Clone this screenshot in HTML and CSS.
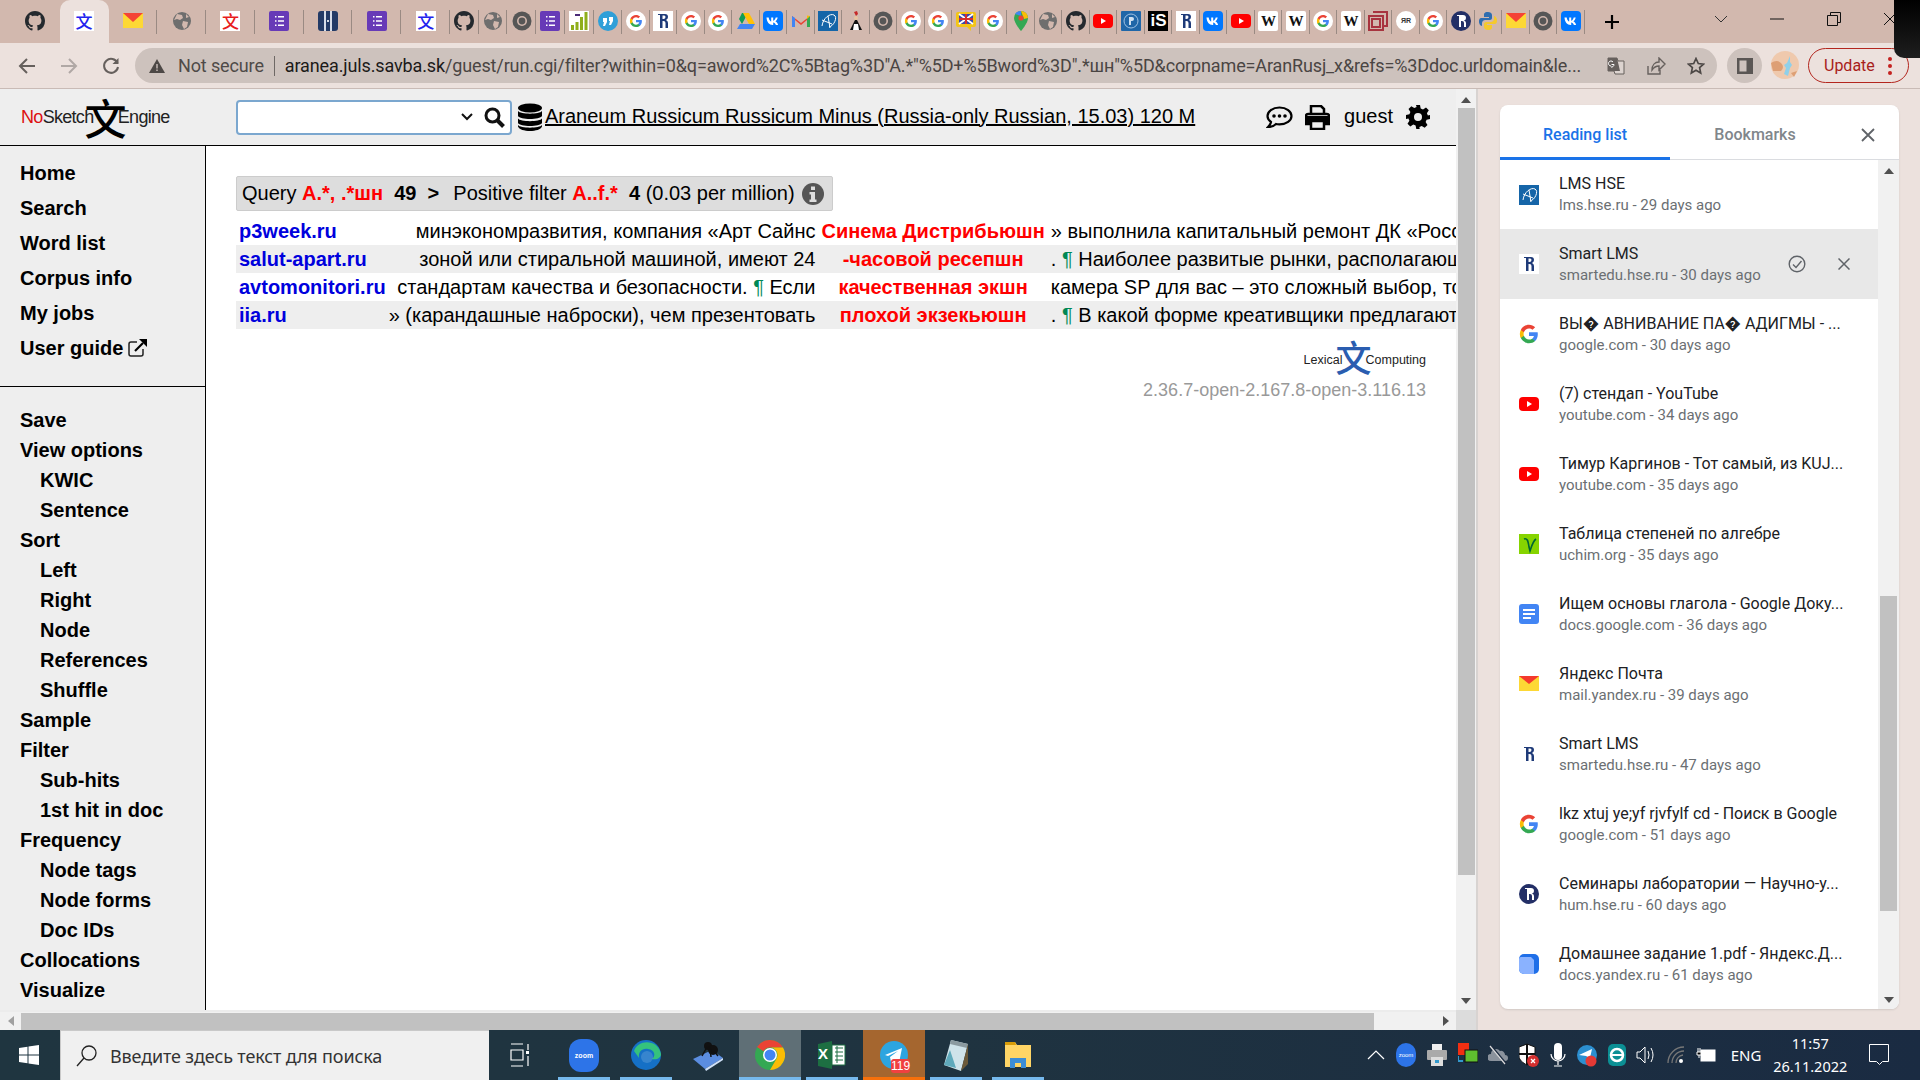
FILE: index.html
```html
<!DOCTYPE html>
<html lang="ru">
<head>
<meta charset="utf-8">
<title>NoSketch Engine</title>
<link rel="stylesheet" href="styles.css">
</head>
<body>
<svg class="defs" width="0" height="0">
  <symbol id="github" viewBox="0 0 16 16"><path fill="#24292e" d="M8 0C3.58 0 0 3.58 0 8c0 3.54 2.29 6.53 5.47 7.59.4.07.55-.17.55-.38 0-.19-.01-.82-.01-1.49-2.01.37-2.53-.49-2.69-.94-.09-.23-.48-.94-.82-1.13-.28-.15-.68-.52-.01-.53.63-.01 1.08.58 1.23.82.72 1.21 1.87.87 2.33.66.07-.52.28-.87.51-1.07-1.78-.2-3.64-.89-3.64-3.95 0-.87.31-1.59.82-2.15-.08-.2-.36-1.02.08-2.12 0 0 .67-.21 2.2.82.64-.18 1.32-.27 2-.27s1.36.09 2 .27c1.53-1.04 2.2-.82 2.2-.82.44 1.1.16 1.92.08 2.12.51.56.82 1.27.82 2.15 0 3.07-1.87 3.75-3.65 3.95.29.25.54.73.54 1.48 0 1.07-.01 1.93-.01 2.2 0 .21.15.46.55.38A8.013 8.013 0 0016 8c0-4.42-3.58-8-8-8z"/></symbol>
  <symbol id="mail" viewBox="0 0 20 20"><rect y="2" width="20" height="15" fill="#fdd835"/><path d="M0 2h20L10 11z" fill="#f44336"/></symbol>
  <symbol id="globe" viewBox="0 0 20 20"><circle cx="10" cy="10" r="9" fill="#6e6e6e"/><path d="M5 3l5 1 1 3-3 2-3-1-3 1zM11 10l5 1-1 5-3 2-2-4zM14 3l3 3-3 1z" fill="#d2b8ae"/></symbol>
  <symbol id="forms" viewBox="0 0 20 20"><rect width="20" height="20" rx="2" fill="#673ab7"/><path d="M6 5h1.5v1.5H6zM9 5h6v1.5H9zM6 9.2h1.5v1.5H6zM9 9.2h6v1.5H9zM6 13.4h1.5v1.5H6zM9 13.4h6v1.5H9z" fill="#fff"/></symbol>
  <symbol id="pill" viewBox="0 0 20 20"><rect width="20" height="20" rx="3" fill="#233a66"/><path d="M6 0h2v20H6zM12 0h2v20h-2z" fill="#d6dce8"/><rect x="9.2" y="9" width="1.6" height="2" fill="#fff"/></symbol>
  <symbol id="chrome" viewBox="0 0 20 20"><circle cx="10" cy="10" r="9.5" fill="#565656"/><circle cx="10" cy="10" r="5" fill="#d2b8ae"/><circle cx="10" cy="10" r="3.4" fill="#565656"/></symbol>
  <symbol id="bars" viewBox="0 0 20 20"><rect width="20" height="20" fill="#fff"/><path d="M2 14h3v5H2zM6.500 11h3v8h-3zM11 6h3v13h-3zM15.500 1h3v18h-3z" fill="#8fae1b"/><path d="M6 3h5v2H6z" fill="#4a2a78"/></symbol>
  <symbol id="quote" viewBox="0 0 20 20"><circle cx="10" cy="10" r="10" fill="#2f9fd8"/><path d="M5 7h4v4l-2 4H5l1-4H5zM11 6h4v4l-2 4h-2l1-4h-1z" fill="#fff"/></symbol>
  <symbol id="g" viewBox="0 0 24 24"><path fill="#4285F4" d="M22.56 12.25c0-.78-.07-1.53-.2-2.25H12v4.26h5.92c-.26 1.37-1.04 2.53-2.21 3.31v2.77h3.57c2.08-1.92 3.28-4.74 3.28-8.09z"/><path fill="#34A853" d="M12 23c2.97 0 5.46-.98 7.28-2.66l-3.57-2.77c-.98.66-2.23 1.06-3.71 1.06-2.86 0-5.29-1.93-6.16-4.53H2.18v2.84C3.99 20.53 7.7 23 12 23z"/><path fill="#FBBC05" d="M5.84 14.09c-.22-.66-.35-1.36-.35-2.09s.13-1.43.35-2.09V7.07H2.18C1.43 8.55 1 10.22 1 12s.43 3.45 1.18 4.93l3.66-2.84z"/><path fill="#EA4335" d="M12 5.38c1.62 0 3.06.56 4.21 1.64l3.15-3.15C17.45 2.09 14.97 1 12 1 7.7 1 3.99 3.47 2.18 7.07l3.66 2.84c.87-2.6 3.3-4.53 6.16-4.53z"/></symbol>
  <symbol id="gw" viewBox="0 0 24 24"><circle cx="12" cy="12" r="12" fill="#fff"/><use href="#g" x="4" y="4" width="16" height="16"/></symbol>
  <symbol id="hse" viewBox="0 0 20 20"><path d="M5 3h7q3 0 3 3 0 2-2 3 2 1 2 3v5h-2.500v-5q0-2-2-2h-1v7H7V4H5zM9.500 4.500V8h1q2 0 2-2t-2-1.500z" fill="#1e3a78" fill-rule="evenodd"/></symbol>
  <symbol id="hsew" viewBox="0 0 20 20"><rect width="20" height="20" fill="#fff"/><use href="#hse"/></symbol>
  <symbol id="hsec" viewBox="0 0 20 20"><circle cx="10" cy="10" r="10" fill="#232f66"/><path d="M6 4h6q3 0 3 3 0 2-2 2.500 2 .5 2 2.500v4h-2v-4q0-2-2-2h-1v6H8V5H6z" fill="#fff"/></symbol>
  <symbol id="hseb" viewBox="0 0 20 20"><rect width="20" height="20" rx="1" fill="#1f66a8"/><circle cx="10" cy="10" r="7" fill="none" stroke="#9fc2e4"/><path d="M8 6h3q2 0 2 2t-2 2h-1v4H8z" fill="#cfe0f0"/></symbol>
  <symbol id="drive" viewBox="0 0 20 20"><path d="M7 2h6l-6 11-3-5z" fill="#0f9d58" transform="translate(-1 0)"/><path d="M7 2h6l6 11h-6z" fill="#ffc107"/><path d="M1 18l3-5h15l-3 5z" fill="#4285f4"/></symbol>
  <symbol id="vk" viewBox="0 0 20 20"><rect width="20" height="20" rx="4" fill="#0077ff"/><path d="M3.500 6.500h2.200c.3 2.500 1.500 3.800 2.500 4V6.500h2v3.200c1-.1 2.100-1.300 2.500-3.200h2c-.3 1.900-1.500 3.200-2.300 3.800.9.500 2.200 1.600 2.700 3.700h-2.200c-.5-1.400-1.500-2.400-2.700-2.500V14h-.4C6.100 14 3.700 11 3.500 6.500z" fill="#fff"/></symbol>
  <symbol id="gmail" viewBox="0 0 20 20"><path d="M1 5l9 7 9-7v11h-3V9l-6 5-6-5v7H1z" fill="#ea4335"/><path d="M1 5v11h3V7z" fill="#4285f4"/><path d="M19 5v11h-3V7z" fill="#34a853"/><path d="M16 4.500l3 .5-3 3z" fill="#fbbc05"/></symbol>
  <symbol id="lms" viewBox="0 0 20 20"><rect width="20" height="20" fill="#1565a8"/><path d="M4 15C5 7 12 2 16 4s0 11-5 12M10 5l2 12M4 9l10 4" fill="none" stroke="#fff"/></symbol>
  <symbol id="figure" viewBox="0 0 20 20"><path d="M8 1l3-1 1 3-2 2z" fill="#c62828"/><circle cx="10" cy="7" r="2" fill="#e8c4a0"/><path d="M9 9h2l5 10H4z" fill="#111"/><path d="M8 13h4l1 6H7z" fill="#fff"/></symbol>
  <symbol id="gb" viewBox="0 0 20 20"><rect y="1" width="20" height="15" rx="2" fill="#f3c517"/><rect x="3" y="3" width="14" height="10" fill="#3949ab"/><path d="M3 3l14 10M17 3L3 13" stroke="#fff" stroke-width="2"/><path d="M10 3v10M3 8h14" stroke="#d32f2f" stroke-width="2"/><path d="M11 16h4v4z" fill="#f3c517"/></symbol>
  <symbol id="maps" viewBox="0 0 20 20"><path d="M10 0a7 7 0 0 0-7 7c0 5 7 13 7 13s7-8 7-13a7 7 0 0 0-7-7z" fill="#34a853"/><path d="M4 3a7 7 0 0 1 6-3v5z" fill="#4285f4"/><path d="M10 0a7 7 0 0 1 7 7l-4 1z" fill="#fbbc05"/><circle cx="10" cy="7" r="2.600" fill="#ea4335"/></symbol>
  <symbol id="yt" viewBox="0 0 20 20"><rect y="3" width="20" height="14" rx="4" fill="#f00"/><path d="M8 7l5 3-5 3z" fill="#fff"/></symbol>
  <symbol id="red" viewBox="0 0 20 20"><path d="M5 1h14v14h-4M1 5h14v14H1z" fill="none" stroke="#a8343f" stroke-width="2"/><rect x="4" y="8" width="8" height="8" fill="none" stroke="#a8343f" stroke-width="2"/></symbol>
  <symbol id="python" viewBox="0 0 20 20"><path d="M10 1C6 1 6 3 6 4v2h5v1H3C1 7 1 10 1 11s1 4 3 4V12c0-2 2-3 3-3h5c1 0 2-1 2-2V4c0-2-2-3-4-3z" fill="#2f6db0"/><path d="M10 19c4 0 4-2 4-3v-2H9v-1h8c2 0 2-3 2-4s-1-4-3-4v3c0 2-2 3-3 3H8c-1 0-2 1-2 2v3c0 2 2 3 4 3z" fill="#f5c92e"/></symbol>
  <symbol id="gdoc" viewBox="0 0 20 20"><rect width="20" height="20" rx="3" fill="#4285f4"/><path d="M4 5h12v2H4zM4 9h12v2H4zM4 13h8v2H4z" fill="#fff"/></symbol>
  <symbol id="uchim" viewBox="0 0 20 20"><rect width="20" height="20" fill="#86d400"/><path d="M5 5c3-1 4 1 5 8l1 4c2-6 3-10 6-12" fill="none" stroke="#063" stroke-width="1.600"/></symbol>
  <symbol id="ydocs" viewBox="0 0 20 20"><rect width="20" height="20" rx="5" fill="#1f6fe8"/><path d="M0 5q0-2 2-2h10l3 3v14H5a5 5 0 0 1-5-5z" fill="#8ab2ff"/></symbol>
  <symbol id="ymail" viewBox="0 0 20 20"><rect y="2" width="20" height="15" fill="#fdd835"/><path d="M0 2h20L10 10z" fill="#f4392d"/></symbol>
</svg>

<div class="tabstrip">
  <div class="tab"><svg class="ic"><use href="#github"/></svg></div>
  <div class="tab active"><span class="wen blue">文</span></div>
  <div class="tab sep"><svg class="ic"><use href="#mail"/></svg></div>
  <div class="tab sep"><svg class="ic"><use href="#globe"/></svg></div>
  <div class="tab sep"><span class="wen redw">文</span></div>
  <div class="tab sep"><svg class="ic"><use href="#forms"/></svg></div>
  <div class="tab sep"><svg class="ic"><use href="#pill"/></svg></div>
  <div class="tab sep"><svg class="ic"><use href="#forms"/></svg></div>
  <div class="tab sep"><span class="wen blue">文</span></div>
  <div class="tab mini wider"><svg class="ic"><use href="#github"/></svg></div>
  <div class="tab mini wider"><svg class="ic"><use href="#globe"/></svg></div>
  <div class="tab mini wider"><svg class="ic"><use href="#chrome"/></svg></div>
  <div class="tab mini wider"><svg class="ic"><use href="#forms"/></svg></div>
  <div class="tab mini wider"><svg class="ic"><use href="#bars"/></svg></div>
  <div class="tab mini wider"><svg class="ic"><use href="#quote"/></svg></div>
  <div class="tab mini"><svg class="ic"><use href="#gw"/></svg></div>
  <div class="tab mini"><svg class="ic"><use href="#hsew"/></svg></div>
  <div class="tab mini"><svg class="ic"><use href="#gw"/></svg></div>
  <div class="tab mini"><svg class="ic"><use href="#gw"/></svg></div>
  <div class="tab mini"><svg class="ic"><use href="#drive"/></svg></div>
  <div class="tab mini"><svg class="ic"><use href="#vk"/></svg></div>
  <div class="tab mini"><svg class="ic"><use href="#gmail"/></svg></div>
  <div class="tab mini"><svg class="ic"><use href="#lms"/></svg></div>
  <div class="tab mini"><svg class="ic"><use href="#figure"/></svg></div>
  <div class="tab mini"><svg class="ic"><use href="#chrome"/></svg></div>
  <div class="tab mini"><svg class="ic"><use href="#gw"/></svg></div>
  <div class="tab mini"><svg class="ic"><use href="#gw"/></svg></div>
  <div class="tab mini"><svg class="ic"><use href="#gb"/></svg></div>
  <div class="tab mini"><svg class="ic"><use href="#gw"/></svg></div>
  <div class="tab mini"><svg class="ic"><use href="#maps"/></svg></div>
  <div class="tab mini"><svg class="ic"><use href="#globe"/></svg></div>
  <div class="tab mini"><svg class="ic"><use href="#github"/></svg></div>
  <div class="tab mini"><svg class="ic"><use href="#yt"/></svg></div>
  <div class="tab mini"><svg class="ic"><use href="#hseb"/></svg></div>
  <div class="tab mini"><span class="fav is">iS</span></div>
  <div class="tab mini"><svg class="ic"><use href="#hsew"/></svg></div>
  <div class="tab mini"><svg class="ic"><use href="#vk"/></svg></div>
  <div class="tab mini"><svg class="ic"><use href="#yt"/></svg></div>
  <div class="tab mini"><span class="fav wiki">W</span></div>
  <div class="tab mini"><span class="fav wiki">W</span></div>
  <div class="tab mini"><svg class="ic"><use href="#gw"/></svg></div>
  <div class="tab mini"><span class="fav wiki">W</span></div>
  <div class="tab mini"><svg class="ic"><use href="#red"/></svg></div>
  <div class="tab mini"><span class="fav circ">ЯR</span></div>
  <div class="tab mini"><svg class="ic"><use href="#gw"/></svg></div>
  <div class="tab mini"><svg class="ic"><use href="#hsec"/></svg></div>
  <div class="tab mini"><svg class="ic"><use href="#python"/></svg></div>
  <div class="tab mini"><svg class="ic"><use href="#mail"/></svg></div>
  <div class="tab mini"><svg class="ic"><use href="#chrome"/></svg></div>
  <div class="tab mini"><svg class="ic"><use href="#vk"/></svg></div>
  <div class="newtab"><svg width="16" height="16" viewBox="0 0 16 16"><path d="M8 1v14M1 8h14" stroke="#000" stroke-width="2.200"/></svg></div>
  <div class="winctl">
    <svg width="14" height="8" viewBox="0 0 14 8"><path d="M1 1l6 6 6-6" fill="none" stroke="#333"/></svg>
    <svg width="14" height="2" viewBox="0 0 14 2"><path d="M0 1h14" stroke="#111"/></svg>
    <svg width="14" height="14" viewBox="0 0 14 14"><path d="M3.500 3V.5h10v10H11M.5 3.500h10v10H.5z" fill="none" stroke="#111"/></svg>
    <svg width="14" height="14" viewBox="0 0 14 14"><path d="M1 1l12 12M13 1L1 13" stroke="#111"/></svg>
  </div>
</div>
<div class="blackcorner"></div>

<div class="toolbar">
  <div class="navbtns">
    <svg width="18" height="18" viewBox="0 0 18 18"><path d="M17 9H2M9 2L2 9l7 7" fill="none" stroke="#66605d" stroke-width="2"/></svg>
    <svg width="18" height="18" viewBox="0 0 18 18"><path d="M1 9h15M9 2l7 7-7 7" fill="none" stroke="#b0a8a5" stroke-width="2"/></svg>
    <svg width="18" height="18" viewBox="0 0 18 18"><path d="M15.500 6A7 7 0 1 0 16 10" fill="none" stroke="#66605d" stroke-width="2"/><path d="M16.500 1v6h-6z" fill="#66605d"/></svg>
  </div>
  <div class="omnibox">
    <svg class="warn" width="16" height="14" viewBox="0 0 16 14"><path d="M8 0l8 14H0z" fill="#4d4846"/><path d="M7.300 5h1.400v4.500H7.300zM7.300 10.500h1.400V12H7.300z" fill="#cdc2bd"/></svg>
    <span class="notsec">Not secure</span>
    <span class="omsep"></span>
    <span class="url"><b>aranea.juls.savba.sk</b>/guest/run.cgi/filter?within=0&amp;q=aword%2C%5Btag%3D"A.*"%5D+%5Bword%3D".*шн"%5D&amp;corpname=AranRusj_x&amp;refs=%3Ddoc.urldomain&amp;le...</span>
    <span class="omicons">
      <svg width="18" height="18" viewBox="0 0 18 18"><path d="M1 1h9l1 3h6v13H8l-1-3H1z" fill="#dcd3cf" stroke="#66605d"/><path d="M1 1h9l3 13H1z" fill="#66605d"/><path d="M4 9a2.500 2.500 0 1 1 2-4M4.500 7.500H7A2.500 2.500 0 0 1 4 10" fill="none" stroke="#fff"/></svg>
      <svg width="20" height="18" viewBox="0 0 20 18"><path d="M2 9v8h12v-4M6 13C6 8 9 5 13 5V1l6 6-6 6V9c-3 0-5 1-7 4z" fill="none" stroke="#66605d" stroke-width="1.400"/></svg>
      <svg width="18" height="18" viewBox="0 0 18 18"><path d="M9 1.500l2.300 5 5.200.6-3.900 3.500 1.100 5.400L9 13.300 4.300 16l1.100-5.400L1.500 7.100l5.200-.6z" fill="none" stroke="#4d4846" stroke-width="1.700"/></svg>
    </span>
  </div>
  <div class="sidebtn"><svg width="18" height="18" viewBox="0 0 18 18"><path d="M1 1h16v16H1zM3.500 3.500v11h7v-11z" fill="#5a5654" fill-rule="evenodd"/></svg></div>
  <div class="avatar"><svg width="28" height="28" viewBox="0 0 28 28"><circle cx="14" cy="14" r="14" fill="#efc9ad"/><path d="M0 12q6-4 10 0t0 8H2zM20 22l6-2-3 6z" fill="#dd9f75"/><path d="M19 5l-3 7-3 2 2 3-2 6 4 2 2-8 2-3-2-3z" fill="#8fd0ea"/></svg></div>
  <div class="update"><span>Update</span><span class="dots"><i></i><i></i><i></i></span></div>
</div>

<div class="main">
  <div class="view">
    <div class="viewtop">
      <div class="page">
        <header class="hdr">
          <div class="logo"><span class="no">No</span>Sketch<span class="wenlogo">文</span>Engine</div>
          <div class="searchbox">
            <svg width="12" height="8" viewBox="0 0 12 8"><path d="M1 1l5 5 5-5" fill="none" stroke="#111" stroke-width="2"/></svg>
            <svg width="21" height="21" viewBox="0 0 21 21"><circle cx="8.500" cy="8.500" r="6.500" fill="none" stroke="#111" stroke-width="3"/><path d="M13 13l6.500 6.500" stroke="#111" stroke-width="4"/></svg>
          </div>
          <svg class="db" width="24" height="28" viewBox="0 0 24 28"><ellipse cx="12" cy="5" rx="12" ry="4.500" fill="#000"/><path d="M0 8c2 3.500 22 3.500 24 0v5c-2 4-22 4-24 0zM0 15.500c2 3.500 22 3.500 24 0V20c-2 4-22 4-24 0zM0 22c2 3.500 22 3.500 24 0v1.500c-2 6-22 6-24 0z" fill="#000"/></svg>
          <a class="corpus">Araneum Russicum Russicum Minus (Russia-only Russian, 15.03) 120 M</a>
          <span class="hright">
            <svg width="27" height="23" viewBox="0 0 27 23"><path d="M13.500 1.500C6.500 1.500 1.500 5.500 1.500 10c0 2.500 1.500 4.500 3.500 6-.3 2-1.500 3.500-3 5 3 0 6-1 8-3 1 .3 2.500.3 3.500.3 7 0 12-3.800 12-8.300s-5-8.500-12-8.500z" fill="none" stroke="#000" stroke-width="2.200"/><circle cx="8" cy="10" r="1.800"/><circle cx="13.500" cy="10" r="1.800"/><circle cx="19" cy="10" r="1.800"/></svg>
            <svg width="25" height="25" viewBox="0 0 25 25"><path d="M6 10V1h10l3 3v6M6 19H1v-8q0-2 2-2h19q2 0 2 2v8h-5" fill="none" stroke="#000" stroke-width="2.500"/><path d="M1 11h23v8h-5v-3H6v3H1z" fill="#000"/><rect x="6" y="16" width="13" height="8" fill="none" stroke="#000" stroke-width="2.500"/></svg>
            <span class="guest">guest</span>
            <svg width="24" height="24" viewBox="0 0 24 24"><path d="M10 0h4l.7 3.400 2.300 1 3-1.900 2.800 2.800-1.900 3 1 2.300L24 10v4l-3.400.7-1 2.300 1.900 3-2.800 2.800-3-1.900-2.300 1L13.700 24h-3.400l-.7-3.400-2.300-1-3 1.900-2.800-2.800 1.900-3-1-2.300L0 14v-4l3.400-.7 1-2.300-1.900-3L5.300 1.200l3 1.900 2.300-1zM12 8a4 4 0 1 0 0 8 4 4 0 0 0 0-8z" fill-rule="evenodd"/></svg>
          </span>
        </header>
        <div class="body">
          <nav class="side">
            <ul class="nav1">
              <li>Home</li><li>Search</li><li>Word list</li><li>Corpus info</li><li>My jobs</li>
              <li>User guide <svg width="20" height="19" viewBox="0 0 20 19"><path d="M9 3H3q-2 0-2 2v10q0 2 2 2h10q2 0 2-2v-5" fill="none" stroke="#222" stroke-width="1.500"/><path d="M7 12L15 4" stroke="#000" stroke-width="2.200"/><path d="M11 0h8v8z" fill="#000"/></svg></li>
            </ul>
            <ul class="nav2">
              <li>Save</li><li>View options</li><li class="sub">KWIC</li><li class="sub">Sentence</li>
              <li>Sort</li><li class="sub">Left</li><li class="sub">Right</li><li class="sub">Node</li><li class="sub">References</li><li class="sub">Shuffle</li>
              <li>Sample</li><li>Filter</li><li class="sub">Sub-hits</li><li class="sub">1st hit in doc</li>
              <li>Frequency</li><li class="sub">Node tags</li><li class="sub">Node forms</li><li class="sub">Doc IDs</li>
              <li>Collocations</li><li>Visualize</li>
            </ul>
          </nav>
          <main class="content">
            <div class="querybar"><span>Query <b class="r">A.*, .*шн</b>&nbsp; <b>49</b>&nbsp; <b class="gt">&gt;</b>&nbsp; Positive filter <b class="r">A..f.*</b>&nbsp; <b>4</b> (0.03 per million)</span>
              <svg width="22" height="22" viewBox="0 0 22 22"><circle cx="11" cy="11" r="11" fill="#555"/><path d="M9 3.500h4v3.500H9zM7.500 9H13v7.500h1.500V19h-7v-2.500H9v-5H7.500z" fill="#ddd"/></svg>
            </div>
            <div class="results">
              <table>
                <tr><td class="dom">p3week.ru</td><td class="left">минэкономразвития, компания «Арт Сайнс</td><td class="kwic">Синема Дистрибьюшн</td><td class="right">» выполнила капитальный ремонт ДК «Россия»</td></tr>
                <tr><td class="dom">salut-apart.ru</td><td class="left">зоной или стиральной машиной, имеют 24</td><td class="kwic">-часовой ресепшн</td><td class="right">. <i class="pil">¶</i> Наиболее развитые рынки, располагающие</td></tr>
                <tr><td class="dom">avtomonitori.ru</td><td class="left">стандартам качества и безопасности. <i class="pil">¶</i> Если</td><td class="kwic">качественная экшн</td><td class="right">камера SP для вас – это сложный выбор, точнее</td></tr>
                <tr><td class="dom">iia.ru</td><td class="left">» (карандашные наброски), чем презентовать</td><td class="kwic">плохой экзекьюшн</td><td class="right">. <i class="pil">¶</i> В какой форме креативщики предлагают</td></tr>
              </table>
            </div>
            <div class="foot">
              <div class="lc">Lexical<span class="wenlc">文</span>Computing</div>
              <div class="ver">2.36.7-open-2.167.8-open-3.116.13</div>
            </div>
          </main>
        </div>
      </div>
      <div class="vbar"><span class="up"></span><span class="thumb"></span><span class="dn"></span></div>
    </div>
    <div class="hbar"><span class="lt"></span><span class="hthumb"></span><span class="rt"></span><span class="corner"></span></div>
  </div>

  <aside class="panel">
    <div class="card">
      <div class="ptabs"><span class="ptab on">Reading list</span><span class="ptab">Bookmarks</span>
        <svg class="pclose" width="14" height="14" viewBox="0 0 14 14"><path d="M1 1l12 12M13 1L1 13" stroke="#5f6368" stroke-width="1.800"/></svg></div>
      <div class="plist">
        <div class="items">
          <div class="it"><svg class="ic"><use href="#lms"/></svg><div class="tx"><div class="t">LMS HSE</div><div class="s">lms.hse.ru - 29 days ago</div></div></div>
          <div class="it hov"><svg class="ic"><use href="#hsew"/></svg><div class="tx"><div class="t">Smart LMS</div><div class="s">smartedu.hse.ru - 30 days ago</div></div>
            <span class="acts"><svg width="18" height="18" viewBox="0 0 18 18"><circle cx="9" cy="9" r="7.800" fill="none" stroke="#5f6368" stroke-width="1.400"/><path d="M5 9.500l3 3 5.500-6.500" fill="none" stroke="#5f6368" stroke-width="1.400"/></svg><svg width="12" height="12" viewBox="0 0 12 12"><path d="M.5.5l11 11M11.500.5l-11 11" stroke="#5f6368" stroke-width="1.500"/></svg></span></div>
          <div class="it"><svg class="ic"><use href="#g"/></svg><div class="tx"><div class="t">ВЫ� АВНИВАНИЕ ПА� АДИГМЫ - ...</div><div class="s">google.com - 30 days ago</div></div></div>
          <div class="it"><svg class="ic"><use href="#yt"/></svg><div class="tx"><div class="t">(7) стендап - YouTube</div><div class="s">youtube.com - 34 days ago</div></div></div>
          <div class="it"><svg class="ic"><use href="#yt"/></svg><div class="tx"><div class="t">Тимур Каргинов - Тот самый, из KUJ...</div><div class="s">youtube.com - 35 days ago</div></div></div>
          <div class="it"><svg class="ic"><use href="#uchim"/></svg><div class="tx"><div class="t">Таблица степеней по алгебре</div><div class="s">uchim.org - 35 days ago</div></div></div>
          <div class="it"><svg class="ic"><use href="#gdoc"/></svg><div class="tx"><div class="t">Ищем основы глагола - Google Доку...</div><div class="s">docs.google.com - 36 days ago</div></div></div>
          <div class="it"><svg class="ic"><use href="#ymail"/></svg><div class="tx"><div class="t">Яндекс Почта</div><div class="s">mail.yandex.ru - 39 days ago</div></div></div>
          <div class="it"><svg class="ic"><use href="#hse"/></svg><div class="tx"><div class="t">Smart LMS</div><div class="s">smartedu.hse.ru - 47 days ago</div></div></div>
          <div class="it"><svg class="ic"><use href="#g"/></svg><div class="tx"><div class="t">lkz xtuj ye;yf rjvfylf cd - Поиск в Google</div><div class="s">google.com - 51 days ago</div></div></div>
          <div class="it"><svg class="ic"><use href="#hsec"/></svg><div class="tx"><div class="t">Семинары лаборатории — Научно-у...</div><div class="s">hum.hse.ru - 60 days ago</div></div></div>
          <div class="it"><svg class="ic"><use href="#ydocs"/></svg><div class="tx"><div class="t">Домашнее задание 1.pdf - Яндекс.Д...</div><div class="s">docs.yandex.ru - 61 days ago</div></div></div>
        </div>
        <div class="pbar"><span class="up"></span><span class="pthumb"></span><span class="dn"></span></div>
      </div>
    </div>
  </aside>
</div>

<footer class="taskbar">
  <div class="start"><svg width="20" height="20" viewBox="0 0 20 20"><path d="M0 3l8.500-1.200v7.700H0zM9.500 1.600L20 0v9.500H9.500zM0 10.500h8.500v7.700L0 17zM9.500 10.500H20V20L9.500 18.400z" fill="#fff"/></svg></div>
  <div class="tsearch"><svg width="22" height="24" viewBox="0 0 22 24"><circle cx="13" cy="9" r="7" fill="none" stroke="#222" stroke-width="1.300"/><path d="M8 14l-7 8" stroke="#222" stroke-width="1.300"/></svg><span>Введите здесь текст для поиска</span></div>
  <div class="tview"><svg width="20" height="24" viewBox="0 0 20 24"><path d="M1 1h12M1 23h12M1 7h12v10H1zM18 1v6M18 13v10" fill="none" stroke="#fff" stroke-width="1.200"/><rect x="16" y="8" width="3" height="3" fill="#fff"/></svg></div>
  <div class="apps">
    <div class="app on"><svg width="30" height="36" viewBox="0 0 30 36"><rect y="2" width="30" height="33" rx="12" fill="#2d74e8"/><text x="15" y="21" class="zoomtx">zoom</text></svg></div>
    <div class="app on"><svg width="32" height="36" viewBox="0 0 32 36"><circle cx="16" cy="18" r="15" fill="#1570c6"/><path d="M4 14C8 2 28 2 31 17c0 4-4 6-9 5 4-3 3-9-4-10C12 11 8 15 9 21z" fill="#35c27d"/><circle cx="17" cy="20" r="6" fill="#fff" opacity=".15"/></svg></div>
    <div class="app"><svg width="32" height="32" viewBox="0 0 32 32"><path d="M1 20L20 11l11 8-18 11z" fill="#5b8de0"/><path d="M13 30l18-11v2L14 32z" fill="#cfe0f8"/><circle cx="16" cy="7" r="4" fill="#111"/><circle cx="21" cy="11" r="5" fill="#111"/><path d="M15 8l-5 9M18 8l1 10M22 12l4 5" stroke="#111" stroke-width="1.500"/></svg></div>
    <div class="app on act"><svg width="30" height="30" viewBox="0 0 30 30"><circle cx="15" cy="15" r="15" fill="#34a853"/><path d="M15 0a15 15 0 0 1 13 7.500H15a7.500 7.500 0 0 0-6.500 3.800L2 7A15 15 0 0 1 15 0z" fill="#ea4335"/><path d="M28 7.500A15 15 0 0 1 15 30l6.500-11.300A7.500 7.500 0 0 0 15 7.500z" fill="#fbbc05"/><circle cx="15" cy="15" r="7" fill="#fff"/><circle cx="15" cy="15" r="5.500" fill="#4285f4"/></svg></div>
    <div class="app on"><svg width="28" height="28" viewBox="0 0 28 28"><path d="M0 3l14-3v28L0 25z" fill="#1d6f42"/><path d="M14 4h13v20H14z" fill="#fff" stroke="#1d6f42"/><path d="M17 7h8M17 11h8M17 15h8M17 19h8M19 5v17" stroke="#1d6f42"/></svg><span class="xl">X</span></div>
    <div class="app on tg"><svg width="28" height="28" viewBox="0 0 28 28"><circle cx="14" cy="14" r="14" fill="#2ca5e0"/><path d="M5 14l17-7-3 15-5-4-3 3-1-5 8-6-10 5z" fill="#fff"/></svg><span class="badge">119</span></div>
    <div class="app on"><svg width="26" height="32" viewBox="0 0 26 32"><path d="M8 1l17 4-7 27L1 26z" fill="#cfe3ea"/><path d="M8 1l17 4-1 4L7 5z" fill="#8b9aa0"/><path d="M18 32l7-27v20z" fill="#6b5a3a"/><path d="M1 26l6-15 6 18z" fill="#5fa9bb"/></svg></div>
    <div class="app on"><svg width="28" height="28" viewBox="0 0 28 28"><path d="M1 1h10l2 3h14v22H1z" fill="#ffd566"/><path d="M1 1h10l1 3H1z" fill="#d89c08"/><path d="M6 27V17h16v10h-5v-5h-6v5z" fill="#3c8dd6"/></svg></div>
  </div>
  <div class="tray">
    <svg width="18" height="10" viewBox="0 0 18 10"><path d="M1 9l8-8 8 8" fill="none" stroke="#fff" stroke-width="1.200"/></svg>
    <svg width="20" height="24" viewBox="0 0 20 24"><rect width="20" height="24" rx="10" fill="#2d74e8"/><text x="10" y="14" class="zoomtx2">zoom</text></svg>
    <svg width="20" height="24" viewBox="0 0 20 24"><path d="M5 1h10v6H5z" fill="#eee"/><rect y="7" width="20" height="10" rx="1" fill="#aaa"/><path d="M4 14h12v9H4z" fill="#ddd"/><path d="M8 17h4v3H8z" fill="#39c"/></svg>
    <svg width="20" height="24" viewBox="0 0 20 24"><rect width="11" height="12" fill="#f32f12"/><rect x="7" y="7" width="13" height="12" fill="#5fbf2f" stroke="#111"/><path d="M0 13v5h5" fill="none" stroke="#39c" stroke-width="2"/></svg>
    <svg width="20" height="20" viewBox="0 0 20 20"><path d="M3 16a3.500 3.500 0 0 1 0-7 5 5 0 0 1 9-3 4 4 0 0 1 5 4 3 3 0 0 1 0 6z" fill="#8a929c"/><path d="M3 1l15 18" stroke="#1c2b40" stroke-width="2.500"/><path d="M2 1l15 18" stroke="#ddd" stroke-width="1.200"/></svg>
    <span class="traysh"><svg width="20" height="24" viewBox="0 0 20 24"><path d="M8 1l8 3v9c0 4-4 7-8 9-4-2-8-5-8-9V4z" fill="#fff" stroke="#111"/><path d="M8 1v21M0 11h16" stroke="#111" stroke-width="2"/><circle cx="14" cy="18" r="6" fill="#d32f2f"/><path d="M12 16l4 4M16 16l-4 4" stroke="#fff" stroke-width="1.300"/></svg></span>
    <svg width="16" height="24" viewBox="0 0 16 24"><rect x="4" width="8" height="17" rx="4" fill="#fff"/><path d="M1 11a7 7 0 0 0 14 0M8 18v4M4 23h8" fill="none" stroke="#fff" stroke-width="1.200"/></svg>
    <svg width="20" height="24" viewBox="0 0 20 24"><circle cx="10" cy="12" r="10" fill="#2c8fd0"/><path d="M2 12l13-6-2 9-4-2z" fill="#fff"/><circle cx="14" cy="18" r="5.500" fill="#e53935"/></svg>
    <svg width="18" height="22" viewBox="0 0 18 22"><rect width="18" height="22" rx="5" fill="#0c8f94"/><circle cx="9" cy="11" r="6" fill="none" stroke="#fff" stroke-width="2.500"/><path d="M4 11h10" stroke="#fff" stroke-width="2"/></svg>
    <svg width="20" height="20" viewBox="0 0 20 20"><path d="M1 7h3l5-5v16l-5-5H1z" fill="none" stroke="#fff"/><path d="M12 6q2 4 0 8M15 3q4 7 0 14" fill="none" stroke="#fff"/></svg>
    <svg width="18" height="18" viewBox="0 0 18 18"><path d="M1 17A16 16 0 0 1 17 1M5 17A12 12 0 0 1 17 5M9 17a8 8 0 0 1 7-8" fill="none" stroke="#777" stroke-width="1.300"/><circle cx="14" cy="15" r="2" fill="#fff"/></svg>
    <svg width="20" height="14" viewBox="0 0 20 14"><rect x="5" y="2" width="14" height="11" fill="#fff" stroke="#fff"/><path d="M2 0v4M4 0v4M1 4h4v3H1zM3 7v3" stroke="#fff"/></svg>
    <span class="eng">ENG</span>
    <span class="clock"><span>11:57</span><span>26.11.2022</span></span>
    <svg class="notif" width="20" height="22" viewBox="0 0 20 22"><path d="M.5.5h19v17h-6l-3 3-3-3h-7z" fill="none" stroke="#fff"/></svg>
  </div>
</footer>
</body>
</html>
```

FILE: styles.css
```css
* { box-sizing: border-box; }
html, body { margin: 0; padding: 0; }
body { width: 1920px; height: 1080px; overflow: hidden; display: flex; flex-direction: column; font-family: "Liberation Sans", Arial, sans-serif; color: #000; position: relative; background: #ece1dd; }
.defs { position: absolute; }
ul { list-style: none; margin: 0; padding: 0; }

.tabstrip { height: 43px; background: #d2b8ae; display: flex; align-items: stretch; padding-left: 10.5px; flex: none; }
.tab { width: 49px; display: flex; align-items: center; justify-content: center; position: relative; flex: none; padding-bottom: 1px; }
.tab.active { background: #ece1dd; border-radius: 10px 10px 0 0; }
.tab.sep { width: 48.800px; }
.tab.sep::after, .tab.mini::after { content: ""; position: absolute; right: 0; top: 10px; bottom: 9px; width: 1px; background: #9a8a83; }
.tab.mini { width: 27.500px; }
.tab.mini.wider { width: 28.700px; }
.ic { width: 20px; height: 20px; flex: none; display: block; }
.wen { width: 20px; height: 20px; background: #fff; font: 500 17px/20px "Noto Sans CJK SC", sans-serif; text-align: center; }
.blue { color: #2222ee; }
.redw { color: #e81c1c; }
.fav { width: 20px; height: 20px; display: block; text-align: center; }
.is { background: #000; color: #fff; font: 700 17px/20px "Liberation Sans", sans-serif; }
.wiki { background: #fff; color: #111; font: 700 15px/20px "Liberation Serif", serif; border-radius: 2px; }
.circ { background: #fff; color: #333; border-radius: 50%; font: 700 7px/20px "Liberation Sans", sans-serif; }
.newtab { width: 54px; display: flex; align-items: center; justify-content: center; flex: none; }
.winctl { flex: 1; display: flex; align-items: center; gap: 42.500px; padding: 0 0 5px 75px; }
.blackcorner { position: absolute; right: 0; top: 0; width: 26px; height: 58px; background: linear-gradient(#000, #1e1e1e); border-radius: 0 0 0 10px; }

.toolbar { height: 46px; flex: none; display: flex; align-items: flex-start; padding-top: 5px; border-bottom: 1px solid #c9bbb6; background: #ece1dd; }
.navbtns { width: 135px; height: 35px; display: flex; align-items: center; padding-left: 18px; gap: 24px; }
.omnibox { width: 1582px; height: 35px; background: #cdc2bd; border-radius: 18px; display: flex; align-items: center; padding-left: 14px; font: 400 18px/35px "Roboto", sans-serif; letter-spacing: -.13px; color: #4a4543; overflow: hidden; flex: none; }
.warn { flex: none; }
.notsec { margin-left: 13px; color: #4f4a48; flex: none; }
.omsep { width: 1px; height: 20px; background: #6e6865; margin: 0 10px 0 10px; flex: none; }
.url { white-space: nowrap; flex: none; width: 1296px; overflow: hidden; }
.url b { font-weight: 400; color: #1c1a19; }
.omicons { display: flex; align-items: center; gap: 21px; margin-left: 26px; flex: none; }
.sidebtn { width: 35px; height: 35px; border-radius: 50%; background: #cdc2bd; margin-left: 10px; display: flex; align-items: center; justify-content: center; flex: none; }
.avatar { width: 28px; height: 28px; margin: 3px 0 0 9px; flex: none; }
.avatar svg { display: block; }
.update { width: 101px; height: 35px; margin-left: 9px; border: 1px solid #b3261e; border-radius: 18px; color: #a8201a; font: 400 16px/33px "Roboto", sans-serif; display: flex; align-items: center; padding-left: 15px; gap: 13px; flex: none; }
.dots { display: flex; flex-direction: column; gap: 3px; }
.dots i { width: 4px; height: 4px; border-radius: 50%; background: #c5221f; display: block; }

.main { height: 941px; flex: none; display: flex; }
.view { width: 1478px; display: flex; flex-direction: column; border-right: 2px solid #d8d3d1; background: #fff; flex: none; }
.viewtop { height: 921px; display: flex; }
.page { width: 1456px; display: flex; flex-direction: column; flex: none; }
.hdr { height: 57px; flex: none; background: #eee; border-bottom: 1px solid #000; display: flex; align-items: center; padding-left: 21px; }
.logo { width: 215px; flex: none; display: flex; align-items: center; font: 400 18px/1 "Liberation Sans Narrow", "Liberation Sans", sans-serif; color: #222; letter-spacing: -.7px; }
.no { color: #d11; }
.wenlogo { font: 500 42px/42px "Noto Sans CJK SC", sans-serif; color: #000; margin: 0 -8px 0 -9px; }
.searchbox { width: 276px; height: 35px; flex: none; background: #fff; border: 2px solid #7ba7cf; border-radius: 4px; display: flex; align-items: center; justify-content: flex-end; padding-right: 5px; gap: 11px; }
.db { margin-left: 6px; flex: none; }
.corpus { margin: 0 0 2px 3px; font-size: 20px; text-decoration: underline; white-space: nowrap; flex: none; }
.hright { margin-left: auto; display: flex; align-items: center; padding-right: 26px; gap: 0; }
.hright svg:nth-child(2) { margin-left: 12px; }
.guest { font-size: 20px; margin: 0 13px 2px 14px; }

.body { flex: 1; display: flex; min-height: 0; }
.side { width: 206px; flex: none; background: #eee; border-right: 1px solid #000; font-weight: 700; font-size: 20px; }
.nav1 { padding: 10px 0 20px 20px; border-bottom: 1px solid #000; }
.nav1 li { height: 35px; line-height: 35px; display: flex; align-items: center; gap: 5px; }
.nav2 { padding: 18px 0 0 20px; }
.nav2 li { height: 30px; line-height: 30px; }
.nav2 li.sub { padding-left: 20px; }

.content { flex: 1; min-width: 0; padding: 30px 0 0 30px; display: flex; flex-direction: column; align-items: flex-start; overflow: hidden; font-size: 20px; }
.querybar { height: 35px; background: #ddd; border: 1px solid #ccc; border-radius: 2px; display: flex; align-items: center; padding: 0 8px 0 5px; white-space: nowrap; flex: none; }
.querybar svg { margin-left: 7px; }
.gt { margin-right: 3px; }
.r { color: #f00; }
.results { width: 1220px; overflow: hidden; margin-top: 6px; flex: none; }
table { border-collapse: collapse; white-space: nowrap; }
tr { height: 28px; }
tr:nth-child(even) { background: #eee; }
td { padding: 0 3px; }
.dom { color: #00d; font-weight: 700; padding-right: 0; }
.left { text-align: right; }
.kwic { color: #f00; font-weight: 700; text-align: center; }
.pil { font-style: normal; color: #085; }
.foot { width: 1190px; display: flex; flex-direction: column; align-items: flex-end; margin-top: 12px; }
.lc { display: flex; align-items: center; font: 400 12.500px/36px "Liberation Sans", sans-serif; color: #222; height: 38px; }
.wenlc { font: 500 36px/38px "Noto Sans CJK SC", sans-serif; color: #2a5db0; margin: 0 -6px 0 -7px; transform: translateY(-4px); }
.ver { color: #999; font-size: 18px; margin-top: 1px; }

.vbar { width: 20px; flex: none; background: #f1f1f1; position: relative; display: flex; flex-direction: column; align-items: center; }
.vbar .thumb { width: 17px; height: 767px; background: #c1c1c1; margin-top: 19px; }
.up, .dn, .lt, .rt { width: 0; height: 0; border: 5px solid transparent; display: block; }
.up { border-bottom: 6px solid #505050; border-top: 0; position: absolute; top: 8px; }
.dn { border-top: 6px solid #505050; border-bottom: 0; position: absolute; bottom: 6px; }
.hbar { height: 20px; flex: none; background: #f1f1f1; border-top: 2px solid #ececec; display: flex; align-items: center; padding-left: 21px; position: relative; }
.lt { border-right: 6px solid #a0a0a0; border-left: 0; position: absolute; left: 8px; }
.hthumb { width: 1353px; height: 17px; background: #c1c1c1; }
.rt { border-left: 6px solid #505050; border-right: 0; position: absolute; left: 1443px; }
.corner { position: absolute; left: 1456px; top: -2px; width: 20px; height: 20px; background: #dcdcdc; }

.panel { flex: 1; padding: 16px 21px 21px 22px; background: #ece1dd; }
.card { height: 904px; background: #fff; border-radius: 8px; display: flex; flex-direction: column; overflow: hidden; box-shadow: 0 1px 2px rgba(60,64,67,.15); }
.ptabs { height: 55px; flex: none; display: flex; border-bottom: 1px solid #dadce0; position: relative; font: 500 16px/60px "Roboto", sans-serif; color: #80868b; }
.ptab { width: 170px; text-align: center; }
.ptab.on { color: #1a73e8; border-bottom: 3px solid #1a73e8; height: 55px; }
.pclose { position: absolute; right: 24px; top: 23px; }
.plist { flex: 1; min-height: 0; display: flex; }
.items { flex: 1; min-width: 0; }
.it { height: 70px; display: flex; align-items: center; padding: 0 0 0 19px; gap: 20px; position: relative; }
.it:first-child { height: 69px; }
.hov { background: #e8e8e8; }
.t { font: 400 16px/21px "Roboto", sans-serif; color: #202124; white-space: nowrap; }
.s { font: 400 15px/21px "Roboto", sans-serif; color: #6b6f73; white-space: nowrap; margin-top: 1px; }
.acts { position: absolute; left: 288px; top: 26px; display: flex; align-items: center; gap: 32px; }
.pbar { width: 21px; flex: none; background: #f1f1f1; position: relative; display: flex; flex-direction: column; align-items: center; }
.pthumb { width: 17px; height: 315px; background: #c1c1c1; margin-top: 436px; }

.taskbar { height: 50px; flex: none; display: flex; align-items: center; background: linear-gradient(90deg, #1f3540 0, #1f3340 50%, #1a2b42 100%); color: #fff; }
.start { width: 60px; height: 50px; display: flex; align-items: center; justify-content: center; flex: none; padding-right: 2px; }
.tsearch { width: 429px; height: 50px; background: #f0f0f0; flex: none; display: flex; align-items: center; padding-left: 15px; gap: 12px; color: #333; border: 1px solid #c9c9c9; border-width: 1px 0 0 1px; font: 400 18px "Noto Sans", sans-serif; }
.tsearch span { letter-spacing: -.15px; }
.tview { width: 64px; flex: none; display: flex; justify-content: center; padding-right: 2px; }
.apps { display: flex; gap: 0; flex: none; }
.app { width: 62px; height: 50px; display: flex; align-items: center; justify-content: center; position: relative; flex: none; }
.app.on::after { content: ""; position: absolute; left: 5px; right: 5px; bottom: 0; height: 3px; background: #76b9ed; }
.app.act { background: #5f6f76; }
.app.act::after { left: 0; right: 0; }
.app.tg { background: #a5662f; }
.app.tg::after { left: 0; right: 0; background: #f7700b; }
.xl { position: absolute; left: 17px; top: 14px; font: 700 15px/20px "Liberation Sans", sans-serif; color: #fff; }
.badge { position: absolute; left: 28px; top: 29px; width: 19px; height: 14px; background: #f04040; border-radius: 3px; font: 400 12px/14px "Liberation Sans", sans-serif; color: #fff; text-align: center; }
.zoomtx { font: 700 7px "Liberation Sans", sans-serif; fill: #fff; text-anchor: middle; }
.zoomtx2 { font: 400 6px "Liberation Sans", sans-serif; fill: #fff; text-anchor: middle; }
.tray { flex: 1; display: flex; align-items: center; justify-content: flex-end; gap: 10.800px; padding-right: 31px; }
.traysh { display: block; }
.traysh svg { display: block; }
.eng { font: 400 15px "Noto Sans", sans-serif; margin-left: 4px; flex: none; }
.clock { display: flex; flex-direction: column; align-items: center; flex: none; font: 400 14.500px/23px "Noto Sans", sans-serif; margin: 0 8px 0 -2px; width: 80px; }
.notif { flex: none; }
```
